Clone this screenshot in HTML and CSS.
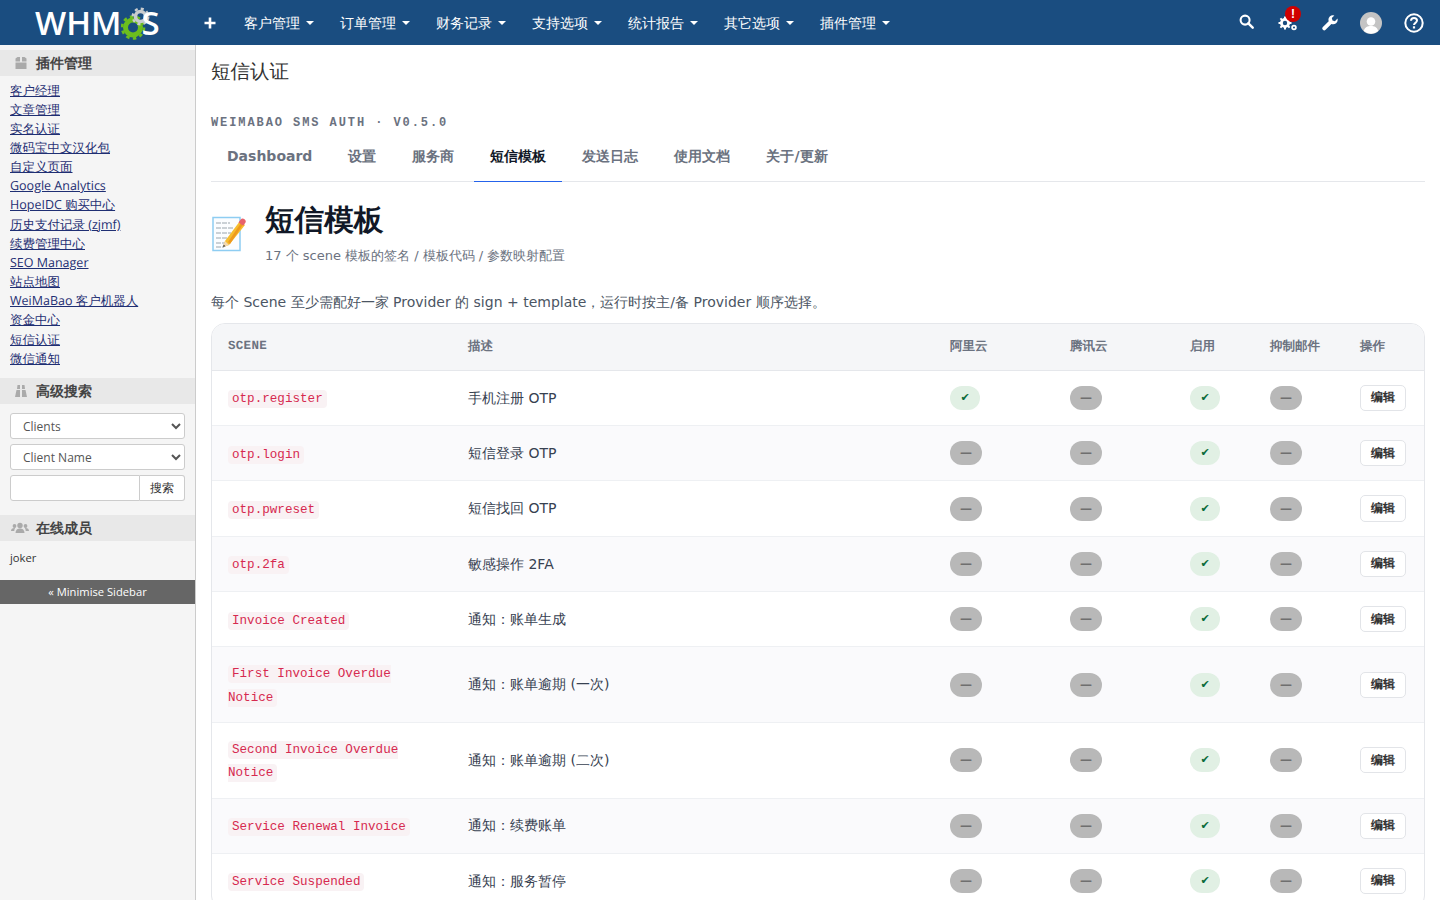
FILE: index.html
```html
<!DOCTYPE html>
<html lang="zh">
<head>
    <meta charset="UTF-8">
    <title>短信认证</title>
    <link rel="stylesheet" href="styles.css">
</head>
<body>
    <header class="topbar">
        <a class="logo" href="#">WHM<svg class="logo-gear" viewBox="0 0 29 34" width="29" height="34">
            <circle cx="12" cy="21.500" r="7.500" fill="none" stroke="#6cbe1e" stroke-width="5"/>
            <circle cx="12" cy="21.500" r="11" fill="none" stroke="#6cbe1e" stroke-width="2.600" stroke-dasharray="3.500 3.410"/>
            <circle cx="19.500" cy="10.500" r="5" fill="none" stroke="#c9ccce" stroke-width="3.600"/>
            <circle cx="19.500" cy="10.500" r="7.800" fill="none" stroke="#c9ccce" stroke-width="2.400" stroke-dasharray="3 3.130"/>
        </svg>S</a>
        <a class="quick-add" href="#">
            <svg viewBox="0 0 14 14" width="14" height="14"><path d="M7 1.500v11M1.500 7h11" stroke="#fff" stroke-width="2.600"/></svg>
        </a>
        <nav class="main-nav">
            <a href="#">客户管理<i class="caret"></i></a>
            <a href="#">订单管理<i class="caret"></i></a>
            <a href="#">财务记录<i class="caret"></i></a>
            <a href="#">支持选项<i class="caret"></i></a>
            <a href="#">统计报告<i class="caret"></i></a>
            <a href="#">其它选项<i class="caret"></i></a>
            <a href="#">插件管理<i class="caret"></i></a>
        </nav>
        <div class="top-icons">
            <a class="top-icon ic-search" href="#">
                <svg viewBox="0 0 16 16" width="15" height="15"><circle cx="6.500" cy="6.500" r="4.800" fill="none" stroke="#fff" stroke-width="2.200"/><path d="M10 10l4.600 4.600" stroke="#fff" stroke-width="2.600" stroke-linecap="round"/></svg>
            </a>
            <a class="top-icon ic-gears" href="#">
                <svg viewBox="0 0 20 16" width="20" height="16">
                    <g fill="none" stroke="#fff"><circle cx="7" cy="8" r="3.600" stroke-width="2.800"/><path d="M7 1.500v13M.5 8h13M2.400 3.400l9.200 9.200M11.600 3.400l-9.200 9.200" stroke-width="2" stroke-dasharray="2.500 8 2.500"/><circle cx="16" cy="12.500" r="1.900" stroke-width="1.700"/></g>
                </svg>
                <span class="alert-dot">!</span>
            </a>
            <a class="top-icon ic-wrench" href="#">
                <svg viewBox="0 0 16 16" width="16" height="16"><path d="M15.500 3.600l-2.600 2.600-2.400-.7-.7-2.400L12.400.5a4.500 4.500 0 0 0-5.700 5.700L.9 12a1.900 1.900 0 0 0 2.700 2.700l5.800-5.800a4.500 4.500 0 0 0 6.100-5.300z" fill="#fff"/></svg>
            </a>
            <a class="top-icon ic-avatar" href="#">
                <svg viewBox="0 0 22 22" width="22" height="22"><circle cx="11" cy="11" r="11" fill="#c4c4c4"/><circle cx="11" cy="9.500" r="4.300" fill="#fff"/><path d="M3.800 19c1-4 3.800-5 7.200-5s6.200 1 7.200 5a11 11 0 0 1-14.400 0z" fill="#fff"/></svg>
            </a>
            <a class="top-icon ic-help" href="#">
                <svg viewBox="0 0 20 20" width="20" height="20"><circle cx="10" cy="10" r="8.700" fill="none" stroke="#fff" stroke-width="2"/><path d="M7 7.800C7 5.900 8.400 5 10 5c1.700 0 3 1 3 2.600 0 2.300-3 2.200-3 4.400" fill="none" stroke="#fff" stroke-width="2"/><rect x="8.900" y="13.300" width="2.200" height="2.200" fill="#fff"/></svg>
            </a>
        </div>
    </header>

    <div class="page">
        <aside class="sidebar">
            <h3 class="side-head">
                <svg viewBox="0 0 14 14" width="14" height="14"><path d="M1.500 5.500V2.500L3.500 1H6v4.500zM8 1h2.500l2 1.500v3H8zM1.500 6.500h11V13h-11z" fill="#aaa"/></svg>
                插件管理
            </h3>
            <ul class="side-links">
                <li><a href="#">客户经理</a></li>
                <li><a href="#">文章管理</a></li>
                <li><a href="#">实名认证</a></li>
                <li><a href="#">微码宝中文汉化包</a></li>
                <li><a href="#">自定义页面</a></li>
                <li><a href="#">Google Analytics</a></li>
                <li><a href="#">HopeIDC 购买中心</a></li>
                <li><a href="#">历史支付记录 (zjmf)</a></li>
                <li><a href="#">续费管理中心</a></li>
                <li><a href="#">SEO Manager</a></li>
                <li><a href="#">站点地图</a></li>
                <li><a href="#">WeiMaBao 客户机器人</a></li>
                <li><a href="#">资金中心</a></li>
                <li><a href="#">短信认证</a></li>
                <li><a href="#">微信通知</a></li>
            </ul>
            <h3 class="side-head">
                <svg viewBox="0 0 14 14" width="14" height="14"><path d="M3.500 1H6v4H3zM8 1h2.500l.5 4H8zM2.500 6H6v7H1zM8 6h3.500L13 13H8z" fill="#aaa"/></svg>
                高级搜索
            </h3>
            <form class="side-search">
                <select class="side-select"><option>Clients</option></select>
                <select class="side-select"><option>Client Name</option></select>
                <div class="search-group">
                    <input type="text">
                    <button type="button">搜索</button>
                </div>
            </form>
            <h3 class="side-head">
                <svg class="icon-users" viewBox="0 0 18 14" width="18" height="14"><g fill="#aaa"><circle cx="9" cy="4.500" r="2.700"/><path d="M4.500 12c0-3.200 2-4.500 4.500-4.500s4.500 1.300 4.500 4.500z"/><circle cx="3.500" cy="5" r="1.900"/><circle cx="14.500" cy="5" r="1.900"/><path d="M0 10c0-2 1.300-3 3.500-3l.6.100C3.500 8 3.300 9 3.300 10zM18 10c0-2-1.300-3-3.500-3l-.6.100c.6.900.8 1.900.8 2.900z"/></g></svg>
                在线成员
            </h3>
            <p class="side-online">joker</p>
            <a class="side-minimise" href="#">« Minimise Sidebar</a>
        </aside>

        <main class="content">
            <h1 class="page-title">短信认证</h1>
            <div class="addon-brand">WEIMABAO SMS AUTH · V0.5.0</div>
            <nav class="tabs">
                <a href="#">Dashboard</a>
                <a href="#">设置</a>
                <a href="#">服务商</a>
                <a class="active" href="#">短信模板</a>
                <a href="#">发送日志</a>
                <a href="#">使用文档</a>
                <a href="#">关于/更新</a>
            </nav>

            <div class="hero">
                <svg class="hero-icon" viewBox="0 0 36 36" width="36" height="36">
                    <path d="M2 1.500h27v33H2z" fill="#fbfdff" stroke="#8ecdf2" stroke-width="1.500"/>
                    <path d="M5 7h14M5 12h18M5 17h15M5 22h11M5 27h9M5 31h8" stroke="#9aa5ad" stroke-width="1" stroke-dasharray="5 1"/>
                    <path d="M14 25L29 5l5 4-16 20-6 2z" fill="#f6bd2e"/>
                    <path d="M17 26L30 7l2 1.500L19 28z" fill="#ee9a1e"/>
                    <path d="M27.500 6.500l2-2.800a2.500 2.500 0 0 1 4.500 3.600l-1.800 2.400z" fill="#e8636b"/>
                    <path d="M14 25l4 4-6 2z" fill="#f3d8b0"/>
                    <path d="M12.600 28.500L12 31l2.600-.8z" fill="#444"/>
                </svg>
                <div class="hero-text">
                    <h2>短信模板</h2>
                    <p>17 个 scene 模板的签名 / 模板代码 / 参数映射配置</p>
                </div>
            </div>

            <p class="intro">每个 Scene 至少需配好一家 Provider 的 sign + template，运行时按主/备 Provider 顺序选择。</p>

            <div class="table-wrap">
                <table class="tpl-table">
                    <colgroup>
                        <col class="c-scene"><col class="c-desc"><col class="c-ali"><col class="c-tx"><col class="c-on"><col class="c-mute"><col class="c-op">
                    </colgroup>
                    <thead>
                        <tr><th class="th-mono">SCENE</th><th>描述</th><th>阿里云</th><th>腾讯云</th><th>启用</th><th>抑制邮件</th><th>操作</th></tr>
                    </thead>
                    <tbody>
                        <tr>
                            <td><code>otp.register</code></td><td>手机注册 OTP</td>
                            <td><span class="pill on">✔</span></td><td><span class="pill off">—</span></td><td><span class="pill on">✔</span></td><td><span class="pill off">—</span></td>
                            <td><button class="btn-edit" type="button">编辑</button></td>
                        </tr>
                        <tr>
                            <td><code>otp.login</code></td><td>短信登录 OTP</td>
                            <td><span class="pill off">—</span></td><td><span class="pill off">—</span></td><td><span class="pill on">✔</span></td><td><span class="pill off">—</span></td>
                            <td><button class="btn-edit" type="button">编辑</button></td>
                        </tr>
                        <tr>
                            <td><code>otp.pwreset</code></td><td>短信找回 OTP</td>
                            <td><span class="pill off">—</span></td><td><span class="pill off">—</span></td><td><span class="pill on">✔</span></td><td><span class="pill off">—</span></td>
                            <td><button class="btn-edit" type="button">编辑</button></td>
                        </tr>
                        <tr>
                            <td><code>otp.2fa</code></td><td>敏感操作 2FA</td>
                            <td><span class="pill off">—</span></td><td><span class="pill off">—</span></td><td><span class="pill on">✔</span></td><td><span class="pill off">—</span></td>
                            <td><button class="btn-edit" type="button">编辑</button></td>
                        </tr>
                        <tr>
                            <td><code>Invoice Created</code></td><td>通知：账单生成</td>
                            <td><span class="pill off">—</span></td><td><span class="pill off">—</span></td><td><span class="pill on">✔</span></td><td><span class="pill off">—</span></td>
                            <td><button class="btn-edit" type="button">编辑</button></td>
                        </tr>
                        <tr>
                            <td><code>First Invoice Overdue Notice</code></td><td>通知：账单逾期 (一次)</td>
                            <td><span class="pill off">—</span></td><td><span class="pill off">—</span></td><td><span class="pill on">✔</span></td><td><span class="pill off">—</span></td>
                            <td><button class="btn-edit" type="button">编辑</button></td>
                        </tr>
                        <tr>
                            <td><code>Second Invoice Overdue Notice</code></td><td>通知：账单逾期 (二次)</td>
                            <td><span class="pill off">—</span></td><td><span class="pill off">—</span></td><td><span class="pill on">✔</span></td><td><span class="pill off">—</span></td>
                            <td><button class="btn-edit" type="button">编辑</button></td>
                        </tr>
                        <tr>
                            <td><code>Service Renewal Invoice</code></td><td>通知：续费账单</td>
                            <td><span class="pill off">—</span></td><td><span class="pill off">—</span></td><td><span class="pill on">✔</span></td><td><span class="pill off">—</span></td>
                            <td><button class="btn-edit" type="button">编辑</button></td>
                        </tr>
                        <tr>
                            <td><code>Service Suspended</code></td><td>通知：服务暂停</td>
                            <td><span class="pill off">—</span></td><td><span class="pill off">—</span></td><td><span class="pill on">✔</span></td><td><span class="pill off">—</span></td>
                            <td><button class="btn-edit" type="button">编辑</button></td>
                        </tr>
                    </tbody>
                </table>
            </div>
        </main>
    </div>
</body>
</html>
```

FILE: styles.css
```css
:root {
    --nav-blue: #1a4d80;
    --border: #e5e7eb;
    --muted: #6b7280;
    --ui-font: "DejaVu Sans", sans-serif;
    --side-font: "Open Sans", sans-serif;
}
html, body {
    height: 100%;
    overflow: hidden;
}
body {
    margin: 0;
    font-family: var(--ui-font);
    font-size: 14px;
    color: #333;
    background: #fff;
}
a {
    text-decoration: none;
}

/* top bar */
.topbar {
    display: flex;
    align-items: center;
    height: 45px;
    background: var(--nav-blue);
    font-family: var(--side-font);
}
.logo {
    display: flex;
    align-items: center;
    width: 203px;
    padding-left: 35px;
    box-sizing: border-box;
    color: #fff;
    font-family: "Open Sans", sans-serif;
    font-size: 33px;
    font-weight: 600;
}
.logo-gear {
    flex: none;
    margin: 0 -9px 0 0;
}
.quick-add {
    display: flex;
    width: 41px;
}
.main-nav {
    display: flex;
    gap: 26px;
}
.main-nav a {
    display: flex;
    align-items: center;
    color: #fff;
    font-size: 14px;
}
.caret {
    width: 0;
    height: 0;
    margin-left: 6px;
    border-top: 4px solid #fff;
    border-left: 4px solid transparent;
    border-right: 4px solid transparent;
}
.top-icons {
    display: flex;
    align-items: center;
    margin-left: auto;
    padding-right: 16px;
}
.top-icon {
    position: relative;
    display: flex;
}
.ic-search { margin: -2px 24px 0 0; }
.ic-gears { margin-right: 24px; }
.ic-wrench { margin-right: 22px; }
.ic-avatar { margin-right: 22px; }
.alert-dot {
    position: absolute;
    top: -9px;
    left: 7px;
    width: 16px;
    height: 16px;
    border-radius: 50%;
    background: #d00000;
    color: #fff;
    font: bold 12px/16px "Liberation Sans", sans-serif;
    text-align: center;
}

/* layout */
.page {
    display: flex;
    height: 855px;
}
.sidebar {
    flex: 0 0 195px;
    min-width: 0;
    padding-top: 5px;
    background: #f5f5f5;
    border-right: 1px solid #ccc;
    background-clip: padding-box;
    font-family: var(--side-font);
    font-size: 12.500px;
}
.content {
    flex: 1;
    min-width: 0;
    padding: 0 15px;
}

/* sidebar */
.side-head {
    display: flex;
    align-items: center;
    gap: 8px;
    height: 26px;
    margin: 0;
    padding-left: 14px;
    background: #e8e8e8;
    color: #444;
    font-size: 14px;
    font-weight: 700;
}
.icon-users {
    margin-left: -3px;
    margin-right: -1px;
}
.side-links {
    list-style: none;
    margin: 0 0 10.500px;
    padding: 4.500px 10px 0;
    text-rendering: geometricPrecision;
}
.side-links li {
    height: 19.170px;
    line-height: 19px;
}
.side-links a {
    color: #1f2f73;
    text-decoration: underline;
}
.side-search {
    display: grid;
    grid-template-columns: minmax(0, 1fr);
    gap: 5px;
    padding: 9px 10px 14px;
}
.side-select {
    width: 175px;
    height: 26px;
    padding: 1px 8px 0;
    border: 1px solid #ccc;
    border-radius: 3px;
    background: #fff;
    color: #555;
    font-family: var(--side-font);
    font-size: 12px;
}
.search-group {
    display: flex;
    height: 26px;
}
.search-group input {
    flex: 1;
    min-width: 0;
    box-sizing: border-box;
    border: 1px solid #ccc;
    border-radius: 3px 0 0 3px;
}
.search-group button {
    width: 45px;
    border: 1px solid #ccc;
    border-left: 0;
    border-radius: 0 3px 3px 0;
    background: #fff;
    color: #333;
    font-family: var(--side-font);
    font-size: 12px;
}
.side-online {
    height: 39px;
    margin: 0;
    padding: 9px 10px 0;
    box-sizing: border-box;
    font-size: 11.200px;
}
.side-minimise {
    display: block;
    height: 24px;
    line-height: 24px;
    background: #666;
    color: #fff;
    font-size: 11.200px;
    text-align: center;
}

/* heading + tabs */
.page-title {
    margin: 15px 0 0;
    color: #333;
    font-size: 19.500px;
    font-weight: 400;
    line-height: 24px;
    text-rendering: geometricPrecision;
}
.addon-brand {
    margin-top: 32px;
    color: #6b7280;
    font-family: "Liberation Mono", monospace;
    font-size: 12px;
    font-weight: 700;
    letter-spacing: 0.16em;
    line-height: 15px;
}
.tabs {
    display: flex;
    gap: 4px;
    margin-top: 4px;
    border-bottom: 1px solid var(--border);
}
.tabs a {
    padding: 10px 16px 14px;
    margin-bottom: -1px;
    border-bottom: 1px solid transparent;
    color: #6b7280;
    font-size: 14px;
    font-weight: 700;
    line-height: 22px;
}
.tabs a.active {
    border-bottom-color: #2563eb;
    color: #111827;
}

/* hero */
.hero {
    display: flex;
    align-items: center;
    gap: 18px;
    margin-top: 20px;
}
.hero-text h2 {
    margin: -1px 0 0;
    color: #111827;
    font-size: 29.600px;
    font-weight: 700;
    line-height: 38px;
    text-rendering: geometricPrecision;
}
.hero-text p {
    margin: 7px 0 0;
    color: #6b7280;
    font-size: 13px;
    line-height: 20px;
}
.intro {
    margin: 25.300px 0 0;
    color: #4b5563;
    font-size: 14px;
    line-height: 22px;
}

/* table */
.table-wrap {
    margin-top: 10px;
    border: 1px solid var(--border);
    border-radius: 14px;
    overflow: hidden;
}
.tpl-table {
    width: 100%;
    border-collapse: collapse;
    table-layout: fixed;
    line-height: 1.61;
}
.c-scene { width: 240px; }
.c-desc { width: 498px; }
.c-ali, .c-tx { width: 120px; }
.c-on { width: 80px; }
.c-mute { width: 90px; }
.tpl-table th {
    height: 46px;
    padding: 0 16px 2px;
    box-sizing: border-box;
    background: #f5f6f8;
    border-bottom: 1px solid var(--border);
    color: #6b7280;
    font-size: 12.500px;
    font-weight: 700;
    line-height: 18px;
    text-align: left;
    text-rendering: geometricPrecision;
}
.tpl-table th:nth-child(n+3),
.tpl-table td:nth-child(n+3) {
    padding-left: 0;
    padding-right: 0;
}
.th-mono {
    font-family: "Liberation Mono", monospace;
    letter-spacing: 0.3px;
}
.tpl-table td {
    padding: 14px 16px;
    border-bottom: 1px solid #eef0f3;
    color: #374151;
    vertical-align: middle;
}
.tpl-table tbody tr:nth-child(even) {
    background: #fafafc;
}
code {
    padding: 2px 4px;
    border-radius: 4px;
    background: #f9f2f4;
    color: #d6294f;
    font-family: "Liberation Mono", monospace;
    font-size: 12.600px;
}
.pill {
    display: inline-block;
    height: 24px;
    border-radius: 12px;
    font-size: 11px;
    line-height: 24px;
    text-align: center;
    vertical-align: middle;
}
.pill.on {
    width: 30px;
    background: #e1f0e4;
    color: #0a6b3a;
}
.pill.off {
    width: 32px;
    background: #b8b8b8;
    color: #6f6f6f;
    font-size: 12px;
    font-weight: 700;
}
.btn-edit {
    display: block;
    width: 46px;
    height: 26.330px;
    padding: 0;
    border: 1px solid #e2e4e8;
    border-radius: 5px;
    background: #fff;
    color: #333;
    font-family: var(--ui-font);
    font-size: 12px;
    font-weight: 700;
}
```
